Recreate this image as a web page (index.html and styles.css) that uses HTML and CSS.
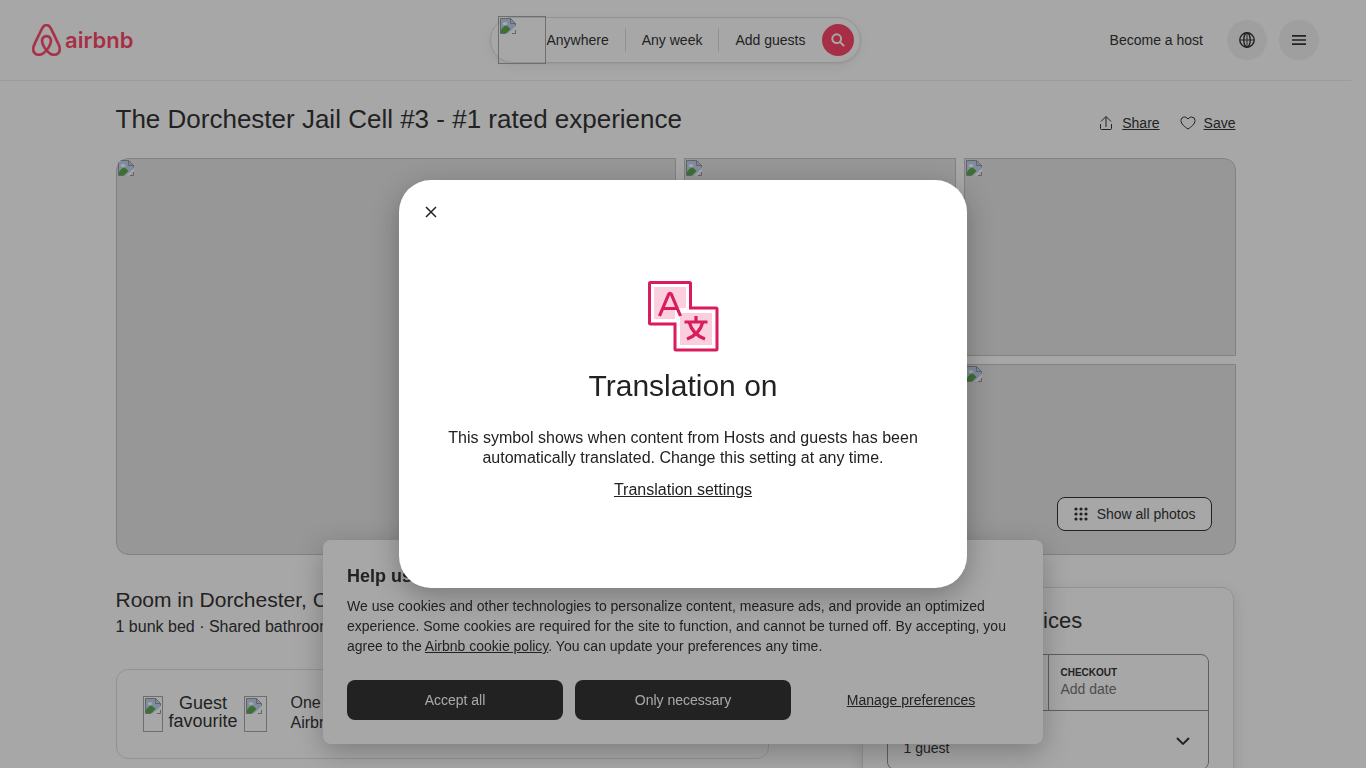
FILE: index.html
```html
<!DOCTYPE html>
<html lang="en">
<head>
<meta charset="utf-8">
<meta name="viewport" content="width=device-width, initial-scale=1">
<title>The Dorchester Jail Cell #3</title>
<link rel="stylesheet" href="styles.css">
</head>
<body>
<svg class="sprite" aria-hidden="true">
  <symbol id="missing" viewBox="0 0 16 16">
    <path d="M.5.5h10l5 5v3l-8 7h-7z" fill="#bdd3f2"/>
    <path d="M1 15v-3c2-3.500 5-5.500 7-3.500l2.500 2.500-4 4z" fill="#4fa33e"/>
    <ellipse cx="5" cy="5.500" rx="2.500" ry="1.500" fill="#fff"/>
    <path d="M.5 15.500V.5h10l5 5v2M10.500.5v5h5M.5 15.500H6M12 15.500h3.500V12" fill="none" stroke="#8a8f98"/>
    <path d="M16 8.500 8.500 15.500h2.500l5-4.500z" fill="#fff"/>
  </symbol>
</svg>

<div class="page">
  <header class="topbar">
    <a class="logo" href="#" aria-label="airbnb homepage">
      <svg width="29" height="32" viewBox="2.500 1 27 30" aria-hidden="true"><path fill="currentColor" stroke="currentColor" stroke-width=".5" d="M16 1c2.008 0 3.463.963 4.751 3.269l.533 1.025c1.954 3.83 6.114 12.54 7.100 14.836l.145.353c.667 1.591.91 2.472.96 3.396l.01.415.001.228c0 4.062-2.877 6.478-6.357 6.478-2.224 0-4.556-1.258-6.709-3.386l-.257-.26-.172-.179h-.011l-.176.185c-2.044 2.100-4.267 3.420-6.414 3.615l-.28.019-.267.006C5.377 31 2.500 28.584 2.500 24.522l.005-.469c.026-.928.23-1.768.83-3.244l.216-.524c.966-2.298 6.083-12.989 7.707-16.034C12.537 1.963 13.992 1 16 1zm0 2c-1.239 0-2.053.539-2.987 2.210l-.523 1.008c-1.926 3.776-6.060 12.430-7.031 14.692l-.345.836c-.427 1.071-.573 1.655-.605 2.240l-.009.33v.206C4.500 27.395 6.411 29 8.857 29c1.773 0 3.870-1.236 5.831-3.354-2.295-2.938-3.855-6.450-3.855-8.910 0-2.913 1.933-5.386 5.178-5.420 3.223.034 5.156 2.507 5.156 5.420 0 2.456-1.555 5.960-3.855 8.907C19.277 27.766 21.370 29 23.142 29c2.447 0 4.358-1.605 4.358-4.478l-.004-.411c-.019-.672-.17-1.296-.714-2.620l-.248-.6c-1.065-2.478-5.993-12.768-7.538-15.664C18.053 3.539 17.240 3 16 3zm.01 10.316c-2.010.021-3.177 1.514-3.177 3.420 0 1.797 1.180 4.580 2.955 7.044l.21.287.174-.234c1.730-2.385 2.898-5.066 2.989-6.875l.006-.221c0-1.906-1.167-3.400-3.156-3.421h-.001z"/></svg>
      <span>airbnb</span>
    </a>
    <div class="search">
      <span class="missing search-img"><svg><use href="#missing"/></svg></span>
      <button type="button" class="search-part first">Anywhere</button>
      <button type="button" class="search-part">Any week</button>
      <button type="button" class="search-part">Add guests</button>
      <button type="button" class="search-go" aria-label="Search">
        <svg width="14" height="14" viewBox="0 0 32 32" fill="none" stroke="#fff" stroke-width="4.500" aria-hidden="true"><circle cx="13" cy="13" r="10"/><path d="m20 20 10 10"/></svg>
      </button>
    </div>
    <nav class="usernav">
      <a class="host" href="#">Become a host</a>
      <button type="button" class="round" aria-label="Choose a language">
        <svg width="16" height="16" viewBox="0 0 16 16" fill="none" stroke="currentColor" stroke-width="1.400" aria-hidden="true"><circle cx="8" cy="8" r="7.200"/><ellipse cx="8" cy="8" rx="3.200" ry="7.200"/><path d="M1 8h14M8 1v14" stroke-width="1"/></svg>
      </button>
      <button type="button" class="round" aria-label="Main menu">
        <svg width="16" height="16" viewBox="0 0 16 16" fill="none" stroke="currentColor" stroke-width="1.700" aria-hidden="true"><path d="M1 3.800h14M1 8h14M1 12.200h14"/></svg>
      </button>
    </nav>
  </header>

  <main class="content">
    <div class="title-row">
      <h1>The Dorchester Jail Cell #3 - #1 rated experience</h1>
      <div class="actions">
        <button type="button"><svg width="16" height="16" viewBox="0 0 32 32" fill="none" stroke="currentColor" stroke-width="2" aria-hidden="true"><path d="M27 18v9a2 2 0 0 1-2 2H7a2 2 0 0 1-2-2v-9M16 3v21M6 13l9.300-9.300a1 1 0 0 1 1.400 0L26 13"/></svg><span>Share</span></button>
        <button type="button"><svg width="16" height="16" viewBox="0 0 32 32" fill="none" stroke="currentColor" stroke-width="2" aria-hidden="true"><path d="M16 28c7-4.733 14-10 14-17a6.980 6.980 0 0 0-7-7c-1.800 0-3.580.68-4.950 2.050L16 8.100l-2.050-2.050A6.980 6.980 0 0 0 9 4c-1.800 0-3.580.68-4.950 2.050A6.980 6.980 0 0 0 2 11c0 7 7 12.267 14 17z"/></svg><span>Save</span></button>
      </div>
    </div>

    <section class="gallery" aria-label="Photos">
      <div class="photos">
        <div class="missing photo large"><svg><use href="#missing"/></svg></div>
        <div class="missing photo"><svg><use href="#missing"/></svg></div>
        <div class="missing photo"><svg><use href="#missing"/></svg></div>
        <div class="missing photo"><svg><use href="#missing"/></svg></div>
        <div class="missing photo"><svg><use href="#missing"/></svg></div>
      </div>
      <button type="button" class="show-all">
        <svg width="16" height="16" viewBox="0 0 16 16" fill="currentColor" aria-hidden="true"><circle cx="3" cy="3" r="1.600"/><circle cx="8" cy="3" r="1.600"/><circle cx="13" cy="3" r="1.600"/><circle cx="3" cy="8" r="1.600"/><circle cx="8" cy="8" r="1.600"/><circle cx="13" cy="8" r="1.600"/><circle cx="3" cy="13" r="1.600"/><circle cx="8" cy="13" r="1.600"/><circle cx="13" cy="13" r="1.600"/></svg>
        Show all photos
      </button>
    </section>

    <div class="columns">
      <section class="overview">
        <h2>Room in Dorchester, County</h2>
        <p>1 bunk bed · Shared bathroom</p>
        <div class="favourite">
          <span class="missing laurel"><svg><use href="#missing"/></svg></span>
          <strong>Guest favourite</strong>
          <span class="missing laurel wide"><svg><use href="#missing"/></svg></span>
          <p>One of the most loved homes on Airbnb, according to guests</p>
        </div>
      </section>
      <aside class="booking">
        <h2>Add dates for prices</h2>
        <div class="picker">
          <div class="dates">
            <button type="button"><b>CHECK-IN</b><span>Add date</span></button>
            <button type="button"><b>CHECKOUT</b><span>Add date</span></button>
          </div>
          <button type="button" class="guests">
            <span><b>GUESTS</b><span>1 guest</span></span>
            <svg width="16" height="16" viewBox="0 0 32 32" fill="none" stroke="currentColor" stroke-width="4" aria-hidden="true"><path d="M28 12 16.700 23.300a1 1 0 0 1-1.400 0L4 12"/></svg>
          </button>
        </div>
      </aside>
    </div>
  </main>
</div>

<section class="cookies" aria-label="Cookie consent">
  <h2>Help us improve your experience</h2>
  <p>We use cookies and other technologies to personalize content, measure ads, and provide an optimized experience. Some cookies are required for the site to function, and cannot be turned off. By accepting, you agree to the <a href="#">Airbnb cookie policy</a>. You can update your preferences any time.</p>
  <div class="choices">
    <button type="button" class="dark">Accept all</button>
    <button type="button" class="dark">Only necessary</button>
    <button type="button" class="plain">Manage preferences</button>
  </div>
</section>

<div class="scrim">
  <div class="modal" role="dialog" aria-modal="true" aria-labelledby="dialog-title">
    <button type="button" class="close" aria-label="Close">
      <svg width="16" height="16" viewBox="0 0 32 32" fill="none" stroke="currentColor" stroke-width="3" aria-hidden="true"><path d="m6 6 20 20M26 6 6 26"/></svg>
    </button>
    <div class="modal-body">
      <svg width="72" height="72" viewBox="0 0 72 72" fill="none" stroke="#d91c5c" aria-hidden="true">
        <path d="M7 7h32v21H28v11H7zM33 33h32v32H33z" fill="#fbcfdd" stroke="none"/>
        <path d="M3.500 2.500h39a1 1 0 0 1 1 1V28h25.500a1 1 0 0 1 1 1v40a1 1 0 0 1-1 1h-40a1 1 0 0 1-1-1V44H3.500a1 1 0 0 1-1-1V3.500a1 1 0 0 1 1-1z" stroke-width="3"/>
        <path d="m12.500 36 9.500-22.500h2L33.500 36M16 28.500h14" stroke-width="3.200" stroke-linejoin="bevel"/>
        <path d="M37.500 42h23M49 36v6M40 59c8-3 13.500-8.500 15.500-16M58 59c-8-3-13.500-8.500-15.500-16" stroke-width="3.200"/>
      </svg>
      <h2 id="dialog-title">Translation on</h2>
      <p>This symbol shows when content from Hosts and guests has been automatically translated. Change this setting at any time.</p>
      <a href="#">Translation settings</a>
    </div>
  </div>
</div>
</body>
</html>
```
FILE: styles.css
```css
* { box-sizing: border-box; }

html, body { height: 100%; }

body {
  margin: 0;
  overflow: hidden;
  background: #fff;
  color: #222;
  font: 14px/20px "Liberation Sans", Arial, sans-serif;
}

h1, h2, p { margin: 0; font-weight: 400; }
button { padding: 0; border: 0; background: none; color: inherit; font: inherit; }
a { color: inherit; }
svg { display: block; flex: none; }
.sprite { position: absolute; width: 0; height: 0; }

.page { height: 100%; margin-right: 15px; overflow: hidden; }

.missing { display: block; border: 1px solid #c0c0c0; }
.missing svg { width: 16px; height: 16px; margin: 1px; }

/* Header */
.topbar {
  display: grid;
  grid-template-columns: 1fr auto 1fr;
  align-items: center;
  height: 81px;
  padding: 0 32px;
  border-bottom: 1px solid #ebebeb;
}
.logo {
  display: flex;
  align-items: center;
  gap: 4px;
  color: #ff385c;
  font: 600 22px/32px Inter, sans-serif;
  text-decoration: none;
}
.search {
  display: flex;
  align-items: center;
  height: 46px;
  padding: 0 6px 0 7px;
  border: 1px solid #ddd;
  border-radius: 23px;
  box-shadow: 0 1px 2px rgba(0, 0, 0, .08), 0 4px 12px rgba(0, 0, 0, .05);
}
.search-img { width: 48px; height: 48px; border-color: #a0a0a0; }
.search-part { height: 24px; padding: 0 16px; border-left: 1px solid #ddd; }
.search-part.first { padding-left: 0; border-left: 0; }
.search-go {
  display: grid;
  place-items: center;
  width: 32px;
  height: 32px;
  border-radius: 50%;
  background: #ff385c;
}
.usernav { display: flex; justify-content: flex-end; align-items: center; gap: 12px; }
.host { margin-right: 12px; text-decoration: none; }
.round {
  display: grid;
  place-items: center;
  width: 40px;
  height: 40px;
  border-radius: 50%;
  background: #f2f2f2;
}

/* Listing */
.content { max-width: 1120px; margin: 0 auto; padding-top: 23px; }
.title-row { display: flex; justify-content: space-between; align-items: center; }
h1 { font-size: 26px; line-height: 30px; }
.actions { display: flex; gap: 20px; padding-top: 8px; }
.actions button { display: flex; align-items: center; gap: 8px; text-decoration: underline; }

.gallery { position: relative; margin-top: 24px; }
.photos {
  display: grid;
  grid-template-columns: 560fr 272fr 272fr;
  grid-template-rows: 198px 191px;
  gap: 8px;
  overflow: hidden;
  border-radius: 12px;
}
.photo { background: #e4e4e4; }
.photo.large { grid-row: span 2; }
.photo:first-child { border-radius: 12px 0 0 12px; }
.photo:nth-child(3) { border-radius: 0 12px 0 0; }
.photo:last-child { border-radius: 0 0 12px 0; }
.show-all {
  position: absolute;
  right: 24px;
  bottom: 24px;
  display: flex;
  align-items: center;
  gap: 8px;
  height: 34px;
  padding: 0 15px;
  border: 1px solid #222;
  border-radius: 8px;
  background: #fff;
}

.columns {
  display: grid;
  grid-template-columns: minmax(0, 653fr) minmax(0, 372fr);
  gap: 93px;
  align-items: start;
  padding: 32px 2px 0 0;
}
.overview h2 { font-size: 21px; line-height: 26px; }
.overview p { font-size: 16px; }
.overview > p { margin-top: 4px; }
.favourite {
  display: flex;
  align-items: center;
  margin-top: 32px;
  padding: 23px 26px 24px;
  border: 1px solid #ddd;
  border-radius: 12px;
}
.laurel { width: 20px; height: 36px; overflow: hidden; border-color: #a0a0a0; }
.laurel.wide { width: 23px; }
.favourite strong { width: 81px; padding-bottom: 4px; font-size: 18px; line-height: 18px; font-weight: 400; text-align: center; }
.favourite p { width: 240px; margin-left: 24px; padding-bottom: 1px; }

.booking {
  padding: 20px 24px 24px;
  border: 1px solid #ddd;
  border-radius: 12px;
  box-shadow: 0 6px 16px rgba(0, 0, 0, .12);
}
.booking h2 { font-size: 22px; line-height: 26px; }
.picker { margin-top: 20px; border: 1px solid #888; border-radius: 8px; }
.picker button { text-align: left; }
.picker b { display: block; font-size: 10px; line-height: 12px; }
.dates { display: grid; grid-template-columns: 1fr 1fr; height: 56px; border-bottom: 1px solid #888; }
.dates button { padding: 0 12px; color: #6a6a6a; }
.dates b { color: #222; }
.dates button + button { border-left: 1px solid #888; }
.guests { display: flex; justify-content: space-between; align-items: center; width: 100%; height: 58px; padding: 0 17px 0 16px; }
.guests > span { padding-top: 4px; }

/* Cookie banner */
.cookies {
  position: fixed;
  bottom: 24px;
  left: 0;
  right: 0;
  max-width: 720px;
  margin: 0 auto;
  padding: 24px;
  border-radius: 8px;
  background: #fff;
  box-shadow: 0 8px 28px rgba(0, 0, 0, .28);
}
.cookies h2 { margin-bottom: 8px; font-size: 18px; line-height: 24px; font-weight: 700; }
.choices { display: grid; grid-template-columns: repeat(3, 1fr); gap: 12px; margin-top: 24px; }
.choices button { height: 40px; border-radius: 8px; }
.choices .dark { background: #222; color: #fff; }
.choices .plain { text-decoration: underline; }

/* Translation dialog */
.scrim {
  position: fixed;
  inset: 0;
  display: grid;
  place-items: center;
  background: rgba(34, 34, 34, .4);
}
.modal {
  width: 568px;
  max-width: 100%;
  padding: 16px 16px 88px;
  border-radius: 32px;
  background: #fff;
  box-shadow: 0 8px 28px rgba(0, 0, 0, .28);
}
.close { display: grid; place-items: center; width: 32px; height: 32px; }
.modal-body {
  display: flex;
  flex-direction: column;
  align-items: center;
  padding: 52px 24px 0;
  font-size: 16px;
  text-align: center;
}
.modal-body h2 { margin: 16px 0 24px; font-size: 30px; line-height: 36px; }
.modal-body p { margin-bottom: 12px; }
```
